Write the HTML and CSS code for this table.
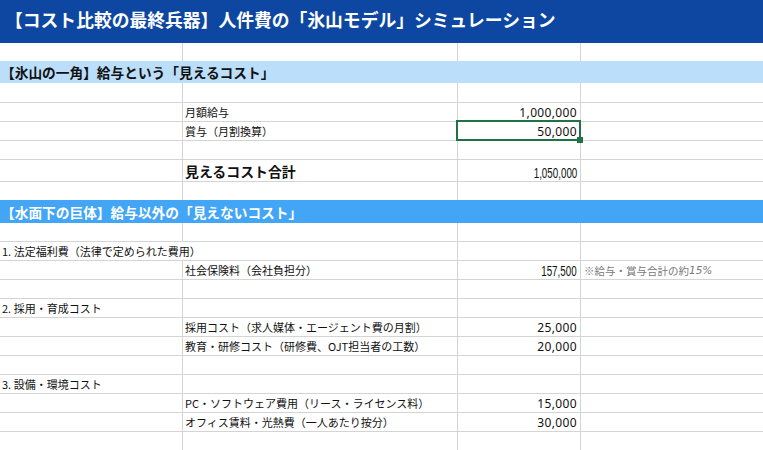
FILE: index.html
```html
<!DOCTYPE html>
<html lang="ja">
<head>
<meta charset="utf-8">
<title>人件費の氷山モデル</title>
<link rel="stylesheet" href="styles.css">
</head>
<body>
<div class="sheet">
  <div class="title">【コスト比較の最終兵器】人件費の「氷山モデル」シミュレーション</div>

  <div class="row h18 nb"><div class="c"></div><div class="c"></div><div class="c"></div><div class="c d"></div></div>
  <div class="band light">【氷山の一角】給与という「見えるコスト」</div>
  <div class="row h20"><div class="c"></div><div class="c"></div><div class="c"></div><div class="c d"></div></div>
  <div class="row"><div class="c"></div><div class="c t">月額給与</div><div class="c n">1,000,000</div><div class="c d"></div></div>
  <div class="row"><div class="c"></div><div class="c t">賞与（月割換算）</div><div class="c n sel">50,000<span class="handle"></span></div><div class="c d"></div></div>
  <div class="row"><div class="c"></div><div class="c"></div><div class="c"></div><div class="c d"></div></div>
  <div class="row h22"><div class="c"></div><div class="c t big">見えるコスト合計</div><div class="c n bot"><span class="cond">1,050,000</span></div><div class="c d"></div></div>
  <div class="row h18 nb"><div class="c"></div><div class="c"></div><div class="c"></div><div class="c d"></div></div>
  <div class="band dark">【水面下の巨体】給与以外の「見えないコスト」</div>

  <div class="row"><div class="c"></div><div class="c"></div><div class="c"></div><div class="c d"></div></div>
  <div class="row"><div class="c t span2">1. 法定福利費（法律で定められた費用）</div><div class="c"></div><div class="c d"></div></div>
  <div class="row"><div class="c"></div><div class="c t">社会保険料（会社負担分）</div><div class="c n bot"><span class="cond">157,500</span></div><div class="c d t note">※給与・賞与合計の約<i>15%</i></div></div>
  <div class="row"><div class="c"></div><div class="c"></div><div class="c"></div><div class="c d"></div></div>

  <div class="row"><div class="c t">2. 採用・育成コスト</div><div class="c"></div><div class="c"></div><div class="c d"></div></div>
  <div class="row"><div class="c"></div><div class="c t">採用コスト（求人媒体・エージェント費の月割）</div><div class="c n">25,000</div><div class="c d"></div></div>
  <div class="row"><div class="c"></div><div class="c t">教育・研修コスト（研修費、OJT担当者の工数）</div><div class="c n">20,000</div><div class="c d"></div></div>
  <div class="row"><div class="c"></div><div class="c"></div><div class="c"></div><div class="c d"></div></div>

  <div class="row"><div class="c t">3. 設備・環境コスト</div><div class="c"></div><div class="c"></div><div class="c d"></div></div>
  <div class="row"><div class="c"></div><div class="c t">PC・ソフトウェア費用（リース・ライセンス料）</div><div class="c n">15,000</div><div class="c d"></div></div>
  <div class="row"><div class="c"></div><div class="c t">オフィス賃料・光熱費（一人あたり按分）</div><div class="c n">30,000</div><div class="c d"></div></div>
  <div class="row"><div class="c"></div><div class="c"></div><div class="c"></div><div class="c d"></div></div>
</div>
</body>
</html>
```

FILE: styles.css
```css
html, body {
  margin: 0;
  padding: 0;
  background: #ffffff;
}

body {
  font-family: "Noto Sans CJK JP", "Noto Sans", sans-serif;
  font-size: 11px;
  color: #111111;
  overflow: hidden;
}

.sheet {
  width: 763px;
  display: flex;
  flex-direction: column;
}

.title {
  height: 43px;
  box-sizing: border-box;
  background: #0d47a1;
  color: #ffffff;
  font-weight: bold;
  font-size: 17.8px;
  display: flex;
  align-items: center;
  padding: 0 0 6px 5px;
  white-space: nowrap;
}

.band {
  box-sizing: border-box;
  font-weight: bold;
  font-size: 13.7px;
  display: flex;
  align-items: center;
  padding-left: 1px;
  white-space: nowrap;
}

.band.light {
  height: 22px;
  background: #bbdefb;
  color: #111111;
}

.band.dark {
  height: 23px;
  background: #42a5f5;
  color: #ffffff;
}

.row {
  display: grid;
  grid-template-columns: 183px 275px 123px 1fr;
  height: 19px;
}

.row.h18 { height: 18px; }
.row.h20 { height: 20px; }
.row.h22 { height: 22px; }

.c {
  box-sizing: border-box;
  border-right: 1px solid #d4d4d4;
  border-bottom: 1px solid #d4d4d4;
  display: flex;
  align-items: center;
  white-space: nowrap;
  min-width: 0;
}

.row.nb .c { border-bottom: none; }

.c.d { border-right: none; }

.c.span2 { grid-column: span 2; }

.t {
  padding-left: 2px;
  overflow: visible;
}

.t.big {
  font-size: 13.9px;
  font-weight: bold;
}

.n {
  justify-content: flex-end;
  padding-right: 3px;
  font-family: "Noto Sans", sans-serif;
  font-size: 12px;
  letter-spacing: 0.35px;
  position: relative;
}

.n.bot {
  align-items: flex-end;
  padding-bottom: 1px;
  letter-spacing: 0;
}

.cond {
  display: inline-block;
  font-family: "Liberation Sans", sans-serif;
  font-size: 14px;
  line-height: 14px;
  transform: scaleX(0.7);
  transform-origin: right bottom;
}

.note {
  color: #7a7a7a;
  font-size: 10.5px;
  padding-left: 3px;
}

.note i {
  font-family: "DejaVu Sans", sans-serif;
  font-style: italic;
  font-size: 10.5px;
}

.sel::before {
  content: "";
  position: absolute;
  top: -2px;
  left: -2px;
  right: -1px;
  bottom: -1px;
  border: 2px solid #217346;
  pointer-events: none;
}

.handle {
  position: absolute;
  right: -3px;
  bottom: -3px;
  width: 6px;
  height: 6px;
  background: #217346;
}
```
